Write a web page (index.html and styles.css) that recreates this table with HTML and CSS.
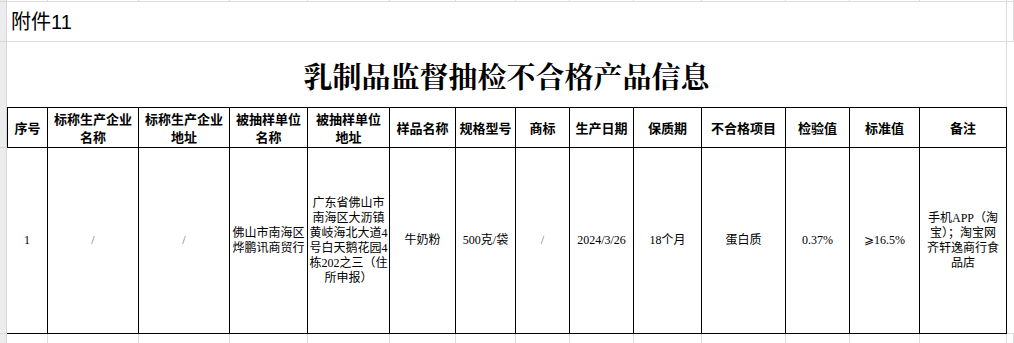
FILE: index.html
```html
<!DOCTYPE html>
<html lang="zh-CN">
<head>
<meta charset="utf-8">
<title>乳制品监督抽检不合格产品信息</title>
<link rel="stylesheet" href="styles.css">
</head>
<body>
<div class="sheet">
  <!-- row 0 (cut off above) -->
  <div class="rh"></div>
  <div class="g"></div><div class="g"></div><div class="g"></div><div class="g"></div><div class="g"></div><div class="g"></div><div class="g"></div>
  <div class="g"></div><div class="g"></div><div class="g"></div><div class="g"></div><div class="g"></div><div class="g"></div><div class="g"></div>
  <div class="g"></div>

  <!-- row 1 -->
  <div class="rh"></div>
  <div class="g span attach">附件11</div>
  <div class="g"></div>

  <!-- row 2 title -->
  <div class="rh nob"></div>
  <div class="g span nob title">乳制品监督抽检不合格产品信息</div>
  <div class="blank"></div>

  <!-- row 3 header -->
  <div class="rh"></div>
  <div class="h first">序号</div>
  <div class="h">标称生产企业<br>名称</div>
  <div class="h">标称生产企业<br>地址</div>
  <div class="h">被抽样单位<br>名称</div>
  <div class="h">被抽样单位<br>地址</div>
  <div class="h">样品名称</div>
  <div class="h">规格型号</div>
  <div class="h">商标</div>
  <div class="h">生产日期</div>
  <div class="h">保质期</div>
  <div class="h">不合格项目</div>
  <div class="h">检验值</div>
  <div class="h">标准值</div>
  <div class="h">备注</div>
  <div class="blank"></div>

  <!-- row 4 data -->
  <div class="rh"></div>
  <div class="d">1</div>
  <div class="d slash">/</div>
  <div class="d slash">/</div>
  <div class="d">佛山市南海区<br>烨鹏讯商贸行</div>
  <div class="d">广东省佛山市<br>南海区大沥镇<br>黄岐海北大道4<br>号白天鹅花园4<br>栋202之三（住<br>所申报）</div>
  <div class="d">牛奶粉</div>
  <div class="d">500克/袋</div>
  <div class="d slash">/</div>
  <div class="d">2024/3/26</div>
  <div class="d">18个月</div>
  <div class="d">蛋白质</div>
  <div class="d">0.37%</div>
  <div class="d">⩾16.5%</div>
  <div class="d">手机APP（淘<br>宝）；淘宝网<br>齐轩逸商行食<br>品店</div>
  <div class="gb"></div>

  <!-- row 5 (cut off below) -->
  <div class="rh"></div>
  <div class="g"></div><div class="g"></div><div class="g"></div><div class="g"></div><div class="g"></div><div class="g"></div><div class="g"></div>
  <div class="g"></div><div class="g"></div><div class="g"></div><div class="g"></div><div class="g"></div><div class="g"></div><div class="g"></div>
  <div class="g"></div>
</div>
</body>
</html>
```

FILE: styles.css
```css
html, body {
  margin: 0;
  padding: 0;
  background: #ffffff;
  overflow: hidden;
}

.sheet {
  display: grid;
  grid-template-columns: 7px 41px 91px 91px 78px 82px 66px 60px 54px 64px 68px 84px 64px 70px 87px 1fr;
  grid-template-rows: 2px 40px 65px 41px 186px 20px;
  width: 1014px;
  height: 343px;
  overflow: hidden;
  color: #000;
}

.sheet > div {
  box-sizing: border-box;
  min-width: 0;
  min-height: 0;
}

.rh {
  background: #ececec;
  border-right: 1px solid #d6d6d6;
  border-bottom: 1px solid #d6d6d6;
}

.rh.nob {
  border-bottom: none;
}

.g {
  border-right: 1px solid #dcdcdc;
  border-bottom: 1px solid #dcdcdc;
}

.gb {
  border-bottom: 1px solid #dcdcdc;
}

.g.nob {
  border-bottom: none;
}

.span {
  grid-column: 2 / 16;
}

.attach {
  display: flex;
  align-items: center;
  padding: 1px 0 0 4px;
  font: 20px/24px "Liberation Sans", "Noto Sans CJK SC", sans-serif;
}

.title {
  display: flex;
  align-items: center;
  justify-content: center;
  padding-top: 2px;
  font: bold 29px/34px "Noto Serif CJK SC", "Noto Sans CJK SC", serif;
}

.h {
  display: flex;
  align-items: center;
  justify-content: center;
  text-align: center;
  white-space: nowrap;
  border-top: 1px solid #000;
  border-right: 1px solid #000;
  border-bottom: 1px solid #000;
  font: bold 13px/18px "Noto Sans CJK SC", sans-serif;
}

.h.first {
  border-left: 1px solid #000;
}

.d {
  display: flex;
  align-items: center;
  justify-content: center;
  text-align: center;
  white-space: nowrap;
  border-right: 1px solid #000;
  border-bottom: 1px solid #000;
  font: 12px/15px "Liberation Serif", "Noto Sans CJK SC", "DejaVu Serif", serif;
}

.slash {
  color: #6b6b6b;
}
```
